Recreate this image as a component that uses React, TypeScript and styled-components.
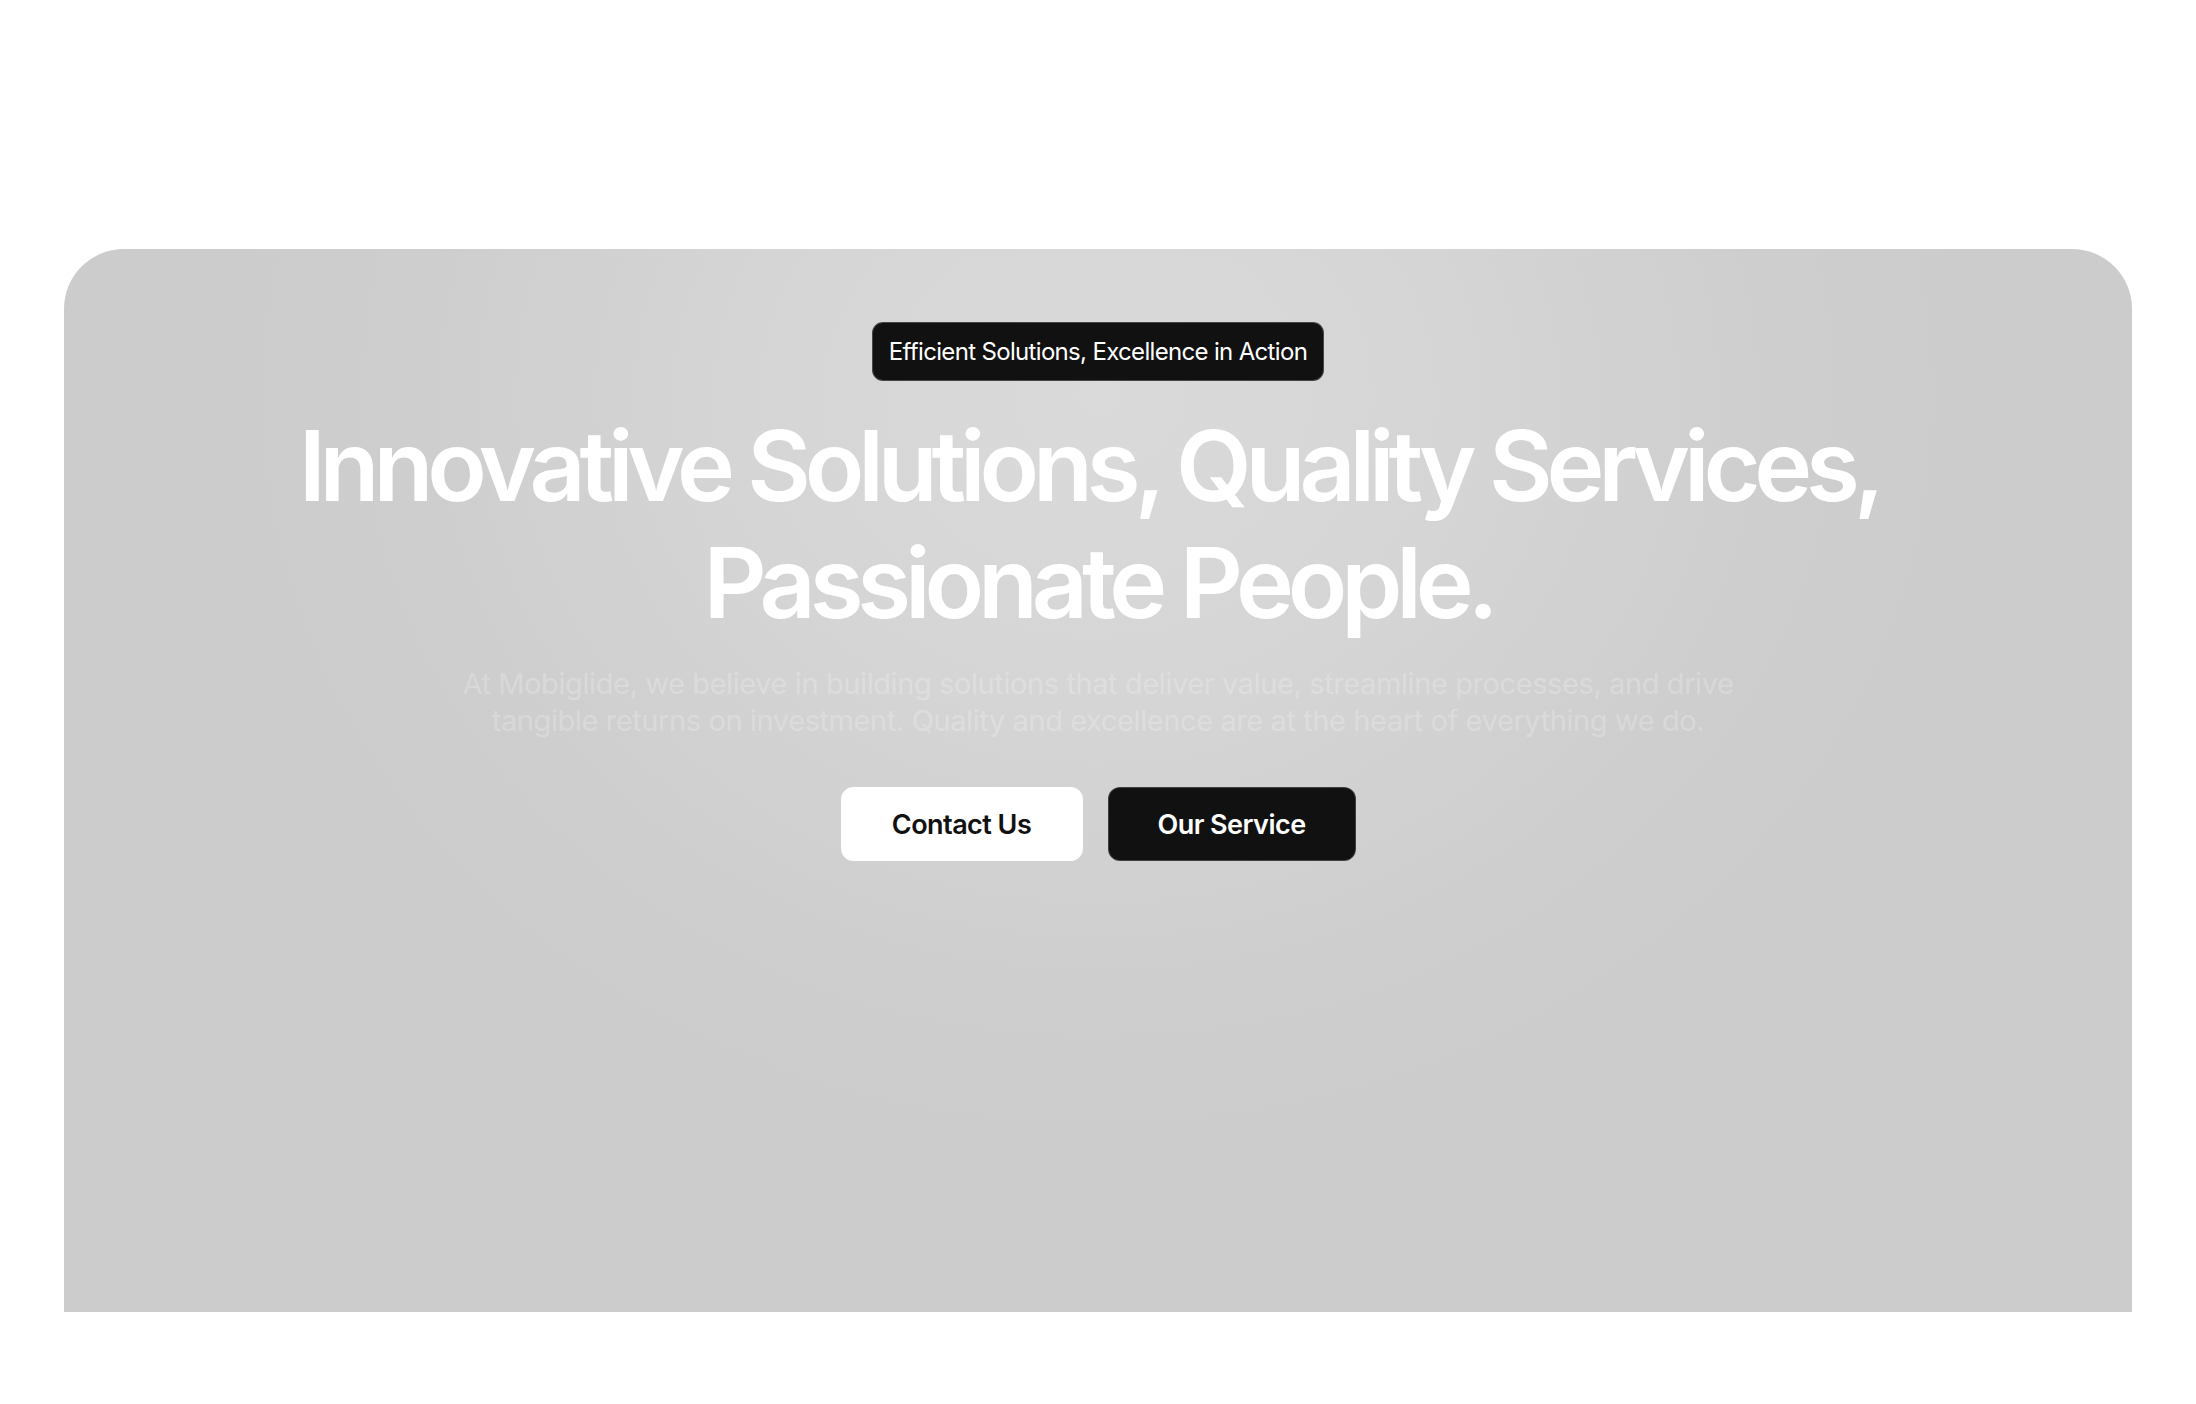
import React from "react";
import styled, { createGlobalStyle } from "styled-components";

const GlobalStyle = createGlobalStyle`
  html, body {
    margin: 0;
    padding: 0;
    background: #ffffff;
  }
  body {
    font-family: Inter, "Noto Sans", "Liberation Sans", sans-serif;
    -webkit-font-smoothing: antialiased;
  }
  * { box-sizing: border-box; }
`;

const Page = styled.main`
  width: 100%;
  min-height: 1404px;
  padding: 249px 64px 0;
`;

const Hero = styled.section`
  height: 1063px;
  border-radius: 60px 60px 0 0;
  background:
    radial-gradient(ellipse 900px 780px at 50% 14%, #dadada 0%, #d5d5d5 40%, #cecece 75%, #cccccc 100%),
    #cccccc;
  display: flex;
  flex-direction: column;
  align-items: center;
  padding-top: 73px;
`;

const Badge = styled.div`
  height: 59px;
  padding: 0 16px;
  display: flex;
  align-items: center;
  background: #111111;
  border: 1px solid rgba(255, 255, 255, 0.22);
  border-radius: 11px;
  color: #ffffff;
  font-size: 24px;
  font-weight: 400;
  letter-spacing: -0.028em;
`;

const Title = styled.h1`
  margin: 26px 0 0;
  text-align: center;
  color: #ffffff;
  font-size: 98px;
  line-height: 117px;
  font-weight: 600;
  letter-spacing: -0.063em;
`;

const Lead = styled.p`
  margin: 24px 0 0;
  max-width: 1400px;
  text-align: center;
  color: rgba(255, 255, 255, 0.24);
  font-size: 29px;
  line-height: 37px;
  font-weight: 400;
  letter-spacing: -0.014em;
`;

const Actions = styled.div`
  margin-top: 48px;
  display: flex;
  gap: 25px;
`;

const Button = styled.button<{ $dark?: boolean; $w: number }>`
  width: ${(p) => p.$w}px;
  height: 74px;
  border-radius: 12px;
  border: 1px solid ${(p) => (p.$dark ? "rgba(255,255,255,0.2)" : "#ffffff")};
  background: ${(p) => (p.$dark ? "#111111" : "#ffffff")};
  color: ${(p) => (p.$dark ? "#ffffff" : "#111111")};
  font-family: Inter, "Noto Sans", "Liberation Sans", sans-serif;
  font-size: 27px;
  font-weight: 600;
  letter-spacing: -0.02em;
  cursor: pointer;
`;

export default function App() {
  return (
    <>
      <GlobalStyle />
      <Page>
        <Hero>
          <Badge>Efficient Solutions, Excellence in Action</Badge>
          <Title>
            Innovative Solutions, Quality Services,{"\u00a0"}
            <br />
            Passionate People.
          </Title>
          <Lead>
            At Mobiglide, we believe in building solutions that deliver value, streamline processes, and drive
            <br />
            tangible returns on investment. Quality and excellence are at the heart of everything we do.
          </Lead>
          <Actions>
            <Button $w={242}>Contact Us</Button>
            <Button $w={248} $dark>
              Our Service
            </Button>
          </Actions>
        </Hero>
      </Page>
    </>
  );
}
